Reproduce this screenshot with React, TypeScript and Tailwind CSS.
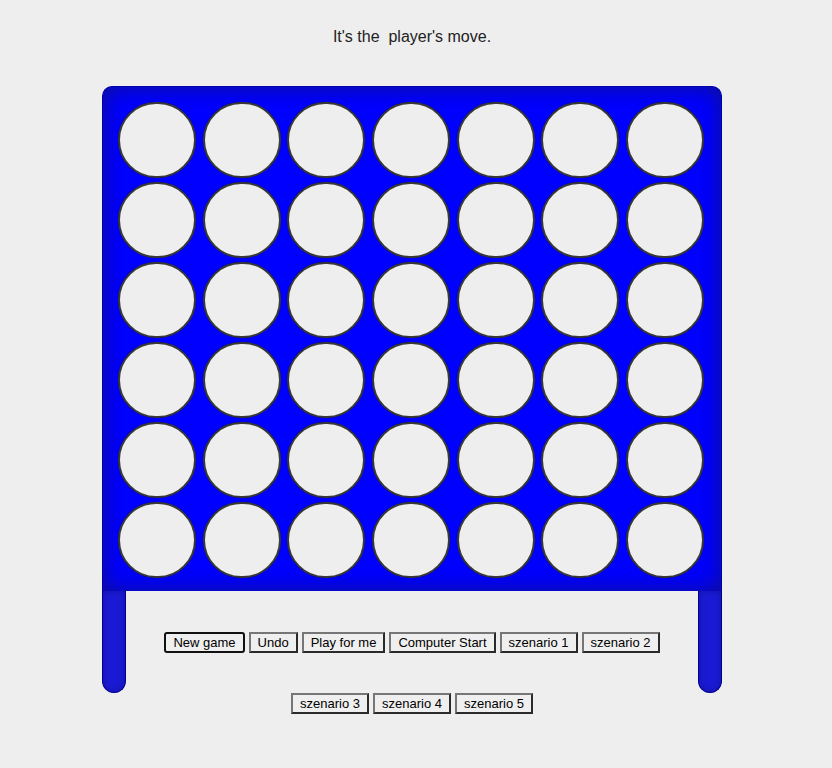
import React from "react";

const ROWS = 6;
const COLS = 7;

const btnBase =
  "h-[21px] px-[7px] text-[13px] leading-none text-black bg-[#efefef] border-2 border-t-[#767676] border-l-[#767676] border-r-[#2a2a2a] border-b-[#2a2a2a]";

function Btn({ label, focused }: { label: string; focused?: boolean }) {
  return (
    <button
      className={
        focused
          ? "h-[21px] px-[7px] text-[13px] leading-none text-black bg-[#efefef] border-2 border-[#111] rounded-[3px]"
          : btnBase
      }
    >
      {label}
    </button>
  );
}

export default function App() {
  return (
    <div
      className="min-h-[768px] bg-[#eeeeee] pr-[8px] pt-[28px]"
      style={{ fontFamily: '"Liberation Sans", Arial, sans-serif' }}
    >
      <div className="text-center text-[16px] leading-[18px] text-[#222]">
        It's the&nbsp; player's move.
      </div>
      <div className="w-[620px] mx-auto mt-[40px]">
        <div className="h-[505px] bg-[#0000ff] rounded-t-[10px] border border-[#0000a8] border-b-0 shadow-[inset_0_0_22px_rgba(20,20,100,0.75)] pt-[15px] pl-[15px] pr-[17px]">
          <div className="flex flex-col gap-[4px]">
            {Array.from({ length: ROWS }).map((_, r) => (
              <div key={r} className="flex gap-[6.7px]">
                {Array.from({ length: COLS }).map((_, c) => (
                  <div
                    key={c}
                    className="w-[78px] h-[76px] rounded-full bg-[#eeeeee] border-2 border-[#383838] shadow-[0_0_1px_rgba(0,0,0,0.6)]"
                  />
                ))}
              </div>
            ))}
          </div>
        </div>
        <div className="flex">
          <div className="w-[24px] h-[102px] bg-[#1a1ad4] border border-t-0 border-[#00008f] rounded-b-[12px] shadow-[inset_0_0_6px_rgba(0,0,60,0.3)]" />
          <div className="flex-1 flex justify-center items-start pt-[41px] gap-[4px]">
            <Btn label="New game" focused />
            <Btn label="Undo" />
            <Btn label="Play for me" />
            <Btn label="Computer Start" />
            <Btn label="szenario 1" />
            <Btn label="szenario 2" />
          </div>
          <div className="w-[24px] h-[102px] bg-[#1a1ad4] border border-t-0 border-[#00008f] rounded-b-[12px] shadow-[inset_0_0_6px_rgba(0,0,60,0.3)]" />
        </div>
        <div className="flex justify-center gap-[4px] mt-0">
          <Btn label="szenario 3" />
          <Btn label="szenario 4" />
          <Btn label="szenario 5" />
        </div>
      </div>
    </div>
  );
}
